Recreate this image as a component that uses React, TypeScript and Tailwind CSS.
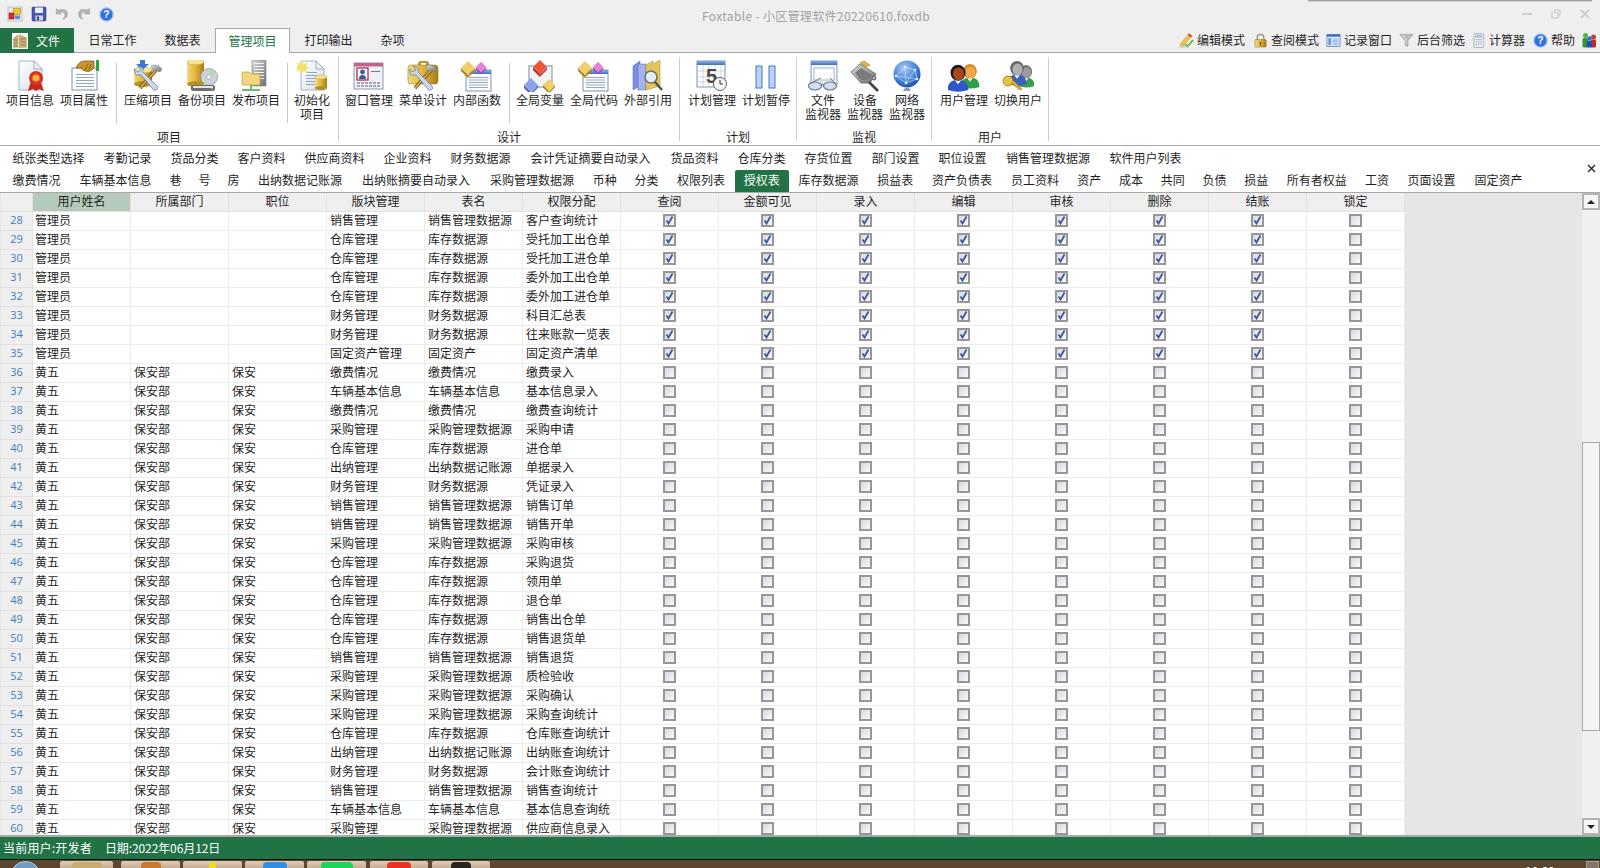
import React from "react";

type IconProps = { size?: number };

const Svg = ({ size = 32, children }: { size?: number; children: React.ReactNode }) => (
  <svg width={size} height={size} viewBox="0 0 32 32" className="shrink-0">
    {children}
  </svg>
);

const Defs = () => (
  <svg className="block h-0 w-0">
    <defs>
      <linearGradient id="gold" x1="0" x2="1" y1="0" y2="0">
        <stop offset="0" stopColor="#f6dc7c" />
        <stop offset="0.55" stopColor="#dcae3a" />
        <stop offset="1" stopColor="#a87c14" />
      </linearGradient>
      <linearGradient id="paper" x1="0" x2="1" y1="0" y2="1">
        <stop offset="0" stopColor="#ffffff" />
        <stop offset="1" stopColor="#d6e0ee" />
      </linearGradient>
      <linearGradient id="titleblue" x1="0" x2="0" y1="0" y2="1">
        <stop offset="0" stopColor="#86aeea" />
        <stop offset="1" stopColor="#3f6fc4" />
      </linearGradient>
      <radialGradient id="globe" cx="0.4" cy="0.3" r="0.8">
        <stop offset="0" stopColor="#a9ccf5" />
        <stop offset="0.6" stopColor="#3f7fd6" />
        <stop offset="1" stopColor="#123f96" />
      </radialGradient>
      <linearGradient id="steel" x1="0" x2="1" y1="0" y2="1">
        <stop offset="0" stopColor="#dcdcdc" />
        <stop offset="1" stopColor="#6e6e6e" />
      </linearGradient>
    </defs>
  </svg>
);

const Doc = ({ x = 4, y = 1, w = 22, h = 29 }) => (
  <g>
    <path
      d={`M${x} ${y}h${w - 8}l8 8v${h - 8}h-${w}z`}
      fill="url(#paper)"
      stroke="#8ba0bf"
      strokeWidth="0.8"
    />
    <path d={`M${x + w - 8} ${y}v8h8z`} fill="#eef2f8" stroke="#8ba0bf" strokeWidth="0.8" />
  </g>
);

const Cyl = ({ x, y, w, h }: { x: number; y: number; w: number; h: number }) => (
  <g>
    <rect x={x} y={y} width={w} height={h} fill="url(#gold)" />
    <ellipse cx={x + w / 2} cy={y + h} rx={w / 2} ry={w / 6} fill="#b98e20" />
    <ellipse cx={x + w / 2} cy={y} rx={w / 2} ry={w / 6} fill="#f8e596" stroke="#c79f30" strokeWidth="0.5" />
  </g>
);

const Rhomb = ({ x, y, c, d, s = 1 }: { x: number; y: number; c: string; d: string; s?: number }) => (
  <g transform={`translate(${x} ${y}) scale(${s})`}>
    <path d="M-7 0L0 7V10L-7 3Z" fill={d} />
    <path d="M7 0L0 7V10L7 3Z" fill={d} opacity="0.8" />
    <path d="M0 -7L7 0L0 7L-7 0Z" fill={c} />
  </g>
);

const Tools = () => (
  <g>
    <path d="M26 8L8 28" stroke="#7c5a20" strokeWidth="3.4" />
    <path d="M26 8L8 28" stroke="#d9b05a" strokeWidth="1.6" />
    <path d="M19 6q6-3 11 3l-2 3-5-2-2 1z" fill="url(#steel)" stroke="#6f7a8a" strokeWidth="0.5" />
    <path d="M6 6l5 2v4l14 14q2 3-1 4t-4-2L9 15H4L2 9l4 3 3-2z" fill="#cbd8ea" stroke="#6078a0" strokeWidth="0.7" />
  </g>
);

const Lines = ({ x, y, w, n, gap = 3, c = "#8fa6c6" }: { x: number; y: number; w: number; n: number; gap?: number; c?: string }) => (
  <g stroke={c} strokeWidth="1">
    {Array.from({ length: n }).map((_, i) => (
      <path key={i} d={`M${x} ${y + i * gap + 0.5}h${w}`} />
    ))}
  </g>
);

const TableIc = ({ x = 5, y = 10, w = 25, h = 21 }) => (
  <g>
    <rect x={x} y={y} width={w} height={h} fill="#fff" stroke="#7e90ad" />
    <rect x={x} y={y} width={w} height="4" fill="url(#titleblue)" />
    <Lines x={x + 3} y={y + 7} w={w - 6} n={5} gap={2.5} />
  </g>
);

const Person = ({ x, y, hair, face, body, s = 1 }: { x: number; y: number; hair: string; face: string; body: string; s?: number }) => (
  <g transform={`translate(${x} ${y}) scale(${s})`}>
    <path d="M-9 20q0-9 9-9t9 9q-9 3-18 0z" fill={body} />
    <path d="M-3 11l3 4 3-4z" fill="#fff" />
    <ellipse cx="0" cy="5" rx="6.5" ry="7" fill={hair} />
    <ellipse cx="0.5" cy="6" rx="4.8" ry="5.6" fill={face} />
  </g>
);

const IconInfo = () => (
  <Svg>
    <Doc x={5} y={1} w={23} h={29} />
    <path d="M17 21l-3 10 5-2 3 2 3-2 5 2-4-10z" fill="#c8281a" />
    <circle cx="22" cy="18" r="7" fill="#d9321e" />
    <circle cx="22" cy="18" r="3.6" fill="#f6b33c" />
  </Svg>
);

const IconAttr = () => (
  <Svg>
    <rect x="4" y="8" width="25" height="22" fill="#fff" stroke="#7e90ad" />
    <Lines x={8} y={14} w={18} n={5} gap={3} />
    <rect x="28" y="0" width="3" height="11" fill="#23a83c" />
    <path d="M8 8q3-7 8-7h10v7q-4 5-9 3t-3-3z" fill="#c9922c" stroke="#7a5510" strokeWidth="0.7" />
    <path d="M17 10l3-6M21 10l2-6" stroke="#7a5510" strokeWidth="0.8" />
  </Svg>
);

const IconCompress = () => (
  <Svg>
    <Cyl x={2} y={10} w={18} h={14} />
    <path d="M8 0h5v4h4l-6.5 6L4 4h4z" fill="#3f75d4" />
    <Tools />
  </Svg>
);

const IconBackup = () => (
  <Svg>
    <Cyl x={1} y={2} w={17} h={22} />
    <circle cx="23" cy="17" r="8.5" fill="#ccd2d8" stroke="#7a8088" strokeWidth="0.6" />
    <circle cx="23" cy="17" r="2.5" fill="#f4f4f4" stroke="#808080" strokeWidth="0.5" />
    <path d="M23 10a7 7 0 0 1 6 4l-4 2z" fill="#a6e0a2" />
    <rect x="5" y="25" width="24" height="6" rx="2" fill="#6e6e6e" />
    <rect x="7" y="26" width="20" height="2" fill="#e4e4e4" />
    <rect x="25" y="28" width="2" height="2" fill="#46c050" />
  </Svg>
);

const IconPublish = () => (
  <Svg>
    <rect x="12" y="0" width="14" height="26" fill="url(#steel)" stroke="#7c7c7c" strokeWidth="0.6" />
    <Lines x={14} y={3} w={10} n={6} gap={3} c="#f2f2f2" />
    <path d="M2 12h7l2 2h9v11H2z" fill="#f2d67c" stroke="#b8942c" strokeWidth="0.6" />
    <path d="M11 25v4M2 30h18" stroke="#3aa640" strokeWidth="1.4" />
  </Svg>
);

const IconInit = () => (
  <Svg>
    <Doc x={5} y={1} w={23} h={29} />
    <Lines x={10} y={12} w={11} n={5} gap={3} />
    <Cyl x={19} y={17} w={12} h={11} />
    <path d="M6 0l1.5 4 4-1.500L10 6l4 1.500-4 1.500 1.500 3.500-4-1.500L6 14l-1.500-3.500-4 1.500L2 9 -1 7.500 2 6 .5 2.500l4 1.500z" fill="#f5e070" stroke="#f8f3b8" strokeWidth="0.4" />
  </Svg>
);

const IconWindow = () => (
  <Svg>
    <rect x="1" y="3" width="29" height="26" fill="#eef0f4" stroke="#8a9ab0" />
    <rect x="1" y="3" width="29" height="3.5" fill="#c2648a" />
    <rect x="4" y="8" width="11" height="12" fill="#fff" stroke="#a81e4c" strokeWidth="1.2" />
    <circle cx="9.5" cy="12" r="2.4" fill="#3a5a96" />
    <path d="M6 19q0-4 3.500-4t3.500 4z" fill="#3a5a96" />
    <Lines x={18} y={11} w={9} n={1} c="#707a8a" />
    <path d="M4 23h23M4 26h23" stroke="#8a94a4" strokeWidth="1.5" strokeDasharray="3 1" />
  </Svg>
);

const IconMenu = () => (
  <Svg>
    <path d="M11 4q0-3 3-3h5q3 0 3 3v2h-3V3h-5v3h-3z" fill="#b8942c" />
    <rect x="1" y="5" width="30" height="19" rx="3" fill="url(#gold)" stroke="#a07e20" strokeWidth="0.6" />
    <Tools />
  </Svg>
);

const IconFunc = () => (
  <Svg>
    <TableIc />
    <Rhomb x={7} y={8} c="#f0cf6a" d="#a8841c" />
    <Rhomb x={20} y={7} c="#e384d8" d="#a044a4" s={0.75} />
  </Svg>
);

const IconVar = () => (
  <Svg>
    <rect x="5" y="6" width="23" height="21" fill="#f4f4f4" stroke="#8a9ab0" strokeWidth="1.2" />
    <Rhomb x={16} y={7} c="#f0553c" d="#b42c1c" />
    <Rhomb x={7} y={25} c="#8ca4ea" d="#4a62b0" />
    <Rhomb x={25} y={25} c="#f0cf6a" d="#a8841c" s={0.85} />
  </Svg>
);

const IconBooks = () => (
  <Svg>
    <path d="M1 6l7-5v25l-7 4z" fill="#7d8fe0" stroke="#5262a8" strokeWidth="0.5" />
    <rect x="6" y="4" width="8" height="26" fill="#a4b2ee" stroke="#5262a8" strokeWidth="0.5" />
    <path d="M14 5l7-4v3l7-4v26l-14 4z" fill="#e6c65c" stroke="#a8841c" strokeWidth="0.5" />
    <circle cx="19" cy="17" r="6" fill="#e4f0f0" stroke="#707070" strokeWidth="1.6" />
    <path d="M23 22l7 8" stroke="#505050" strokeWidth="2.4" />
  </Svg>
);

const IconCalendar = () => (
  <Svg>
    <rect x="1" y="1" width="28" height="26" fill="#fff" stroke="#7e90ad" />
    <rect x="1" y="1" width="28" height="4" fill="url(#titleblue)" />
    <path d="M1 11h28M1 17h28M1 22h28M7 5v22M13 5v22M19 5v22M25 5v22" stroke="#c3ccd8" strokeWidth="0.8" />
    <text x="10" y="23" fontSize="20" fontWeight="700" fill="#454545" fontFamily="'Liberation Sans',sans-serif">5</text>
    <circle cx="24" cy="24" r="6.5" fill="#f2f6fa" stroke="#667" strokeWidth="1" />
    <path d="M24 20v4h3" stroke="#333" strokeWidth="1" fill="none" />
  </Svg>
);

const IconPause = () => (
  <Svg>
    <rect x="6" y="6" width="6" height="22" fill="#bcd2f4" stroke="#4a74c8" strokeWidth="1" />
    <rect x="19" y="6" width="6" height="22" fill="#bcd2f4" stroke="#4a74c8" strokeWidth="1" />
  </Svg>
);

const IconFileMon = () => (
  <Svg>
    <rect x="4" y="1" width="26" height="24" fill="#f2f5fa" stroke="#8a9ab0" />
    <rect x="4" y="1" width="26" height="4" fill="url(#titleblue)" />
    <rect x="7" y="8" width="20" height="12" fill="#fff" stroke="#a8b4c4" />
    <ellipse cx="8" cy="26" rx="6.5" ry="4" fill="#cfe0f2" stroke="#6b7a8c" strokeWidth="1.2" />
    <ellipse cx="23" cy="26" rx="6.5" ry="4" fill="#cfe0f2" stroke="#6b7a8c" strokeWidth="1.2" />
    <path d="M14 25q2-2 3 0M2 24l12-6M29 24l-6-6" stroke="#6b7a8c" strokeWidth="1" fill="none" />
  </Svg>
);

const IconDevice = () => (
  <Svg>
    <path d="M2 12l9-8 16 10-6 9H12z" fill="url(#steel)" stroke="#555" strokeWidth="0.7" />
    <path d="M6 13l6-5 11 7-4 5h-7z" fill="#7a7a7a" />
    <path d="M11 3l4-2 6 4-4 2z" fill="#e3b04a" stroke="#96701c" strokeWidth="0.5" />
    <path d="M20 22l9 9" stroke="#444" strokeWidth="2.6" />
    <circle cx="25" cy="18" r="2" fill="#bbb" stroke="#555" />
  </Svg>
);

const IconGlobe = () => (
  <Svg>
    <circle cx="16" cy="14" r="13.5" fill="url(#globe)" />
    <path d="M5 16l9-9 10 3 2 9-11 4zM14 7l1 16M24 10l-9 13M5 16l21 3" stroke="#dbe9fb" strokeWidth="0.6" fill="none" />
    <g fill="#eaf3ff">
      <circle cx="5" cy="16" r="1.2" />
      <circle cx="14" cy="7" r="1.3" />
      <circle cx="24" cy="10" r="1.2" />
      <circle cx="26" cy="19" r="1.2" />
      <circle cx="15" cy="23" r="1.3" />
    </g>
    <path d="M14 28h4l2 3h-8z" fill="#8ca0b8" />
  </Svg>
);

const IconUsers = () => (
  <Svg>
    <Person x={22} y={6} hair="#d08a2c" face="#f4a848" body="#2e9e48" s={1.05} />
    <Person x={10} y={7} hair="#1c1c1c" face="#a8481a" body="#2c58c8" s={1.15} />
  </Svg>
);

const IconSwitch = () => (
  <Svg>
    <Person x={24} y={7} hair="#777" face="#9c9c9c" body="#3a9e50" s={0.95} />
    <Person x={15} y={3} hair="#666" face="#b0b0b0" body="#3a60c0" s={1.05} />
    <circle cx="6" cy="21" r="5" fill="#e8c33c" stroke="#98781c" strokeWidth="0.8" />
    <path d="M9 23l9 7 2-1-8-8" fill="#d8b030" stroke="#98781c" strokeWidth="0.6" />
  </Svg>
);

// small toolbar icons

const IconApp = ({ size = 16 }: IconProps) => (
  <Svg size={size}>
    <rect x="2" y="2" width="28" height="28" fill="#e6e6e6" stroke="#a0a0a0" />
    <rect x="13" y="5" width="14" height="12" fill="#f2c230" stroke="#a8841c" />
    <rect x="4" y="14" width="10" height="12" fill="#d82c2c" stroke="#8a1616" />
    <rect x="16" y="19" width="10" height="7" fill="#5a8ede" />
  </Svg>
);

const IconSave = ({ size = 16 }: IconProps) => (
  <Svg size={size}>
    <rect x="2" y="2" width="28" height="28" rx="2" fill="#4a56b4" stroke="#2a3278" />
    <rect x="8" y="3" width="16" height="11" fill="#e8ecf4" />
    <rect x="9" y="19" width="15" height="10" fill="#cfd4e6" />
    <rect x="12" y="21" width="4" height="7" fill="#3a4490" />
  </Svg>
);

const IconUndo = ({ size = 16, flip = false }: IconProps & { flip?: boolean }) => (
  <Svg size={size}>
    <g transform={flip ? "translate(32 0) scale(-1 1)" : undefined}>
      <path d="M3 4v12h12l-4-4q8-3 11 3 3 7-4 13 12-3 10-15Q25 2 9 7z" fill="#b4b4b4" stroke="#8c8c8c" strokeWidth="1" />
    </g>
  </Svg>
);

const IconHelp = ({ size = 16 }: IconProps) => (
  <Svg size={size}>
    <circle cx="16" cy="16" r="14" fill="#2f72dc" stroke="#9cbcec" strokeWidth="2.5" />
    <text x="16" y="24" textAnchor="middle" fontSize="22" fontWeight="700" fill="#fff" fontFamily="'Liberation Sans',sans-serif">?</text>
  </Svg>
);

const IconPencil = () => (
  <Svg size={16}>
    <path d="M6 22L22 3l6 5-16 19-8 2z" fill="#efc050" stroke="#b08a28" strokeWidth="0.8" />
    <path d="M22 3l6 5-2 3-6-5z" fill="#d83a2c" />
    <path d="M14 24l5 5 11-13" stroke="#54b83a" strokeWidth="3.5" fill="none" />
    <ellipse cx="11" cy="30" rx="10" ry="1.5" fill="#c8c8c8" />
  </Svg>
);

const IconLock = () => (
  <Svg size={15}>
    <path d="M9 15V9q0-6 7-6t7 6v6" stroke="#9a9488" strokeWidth="3" fill="none" />
    <rect x="4" y="14" width="24" height="16" rx="2" fill="url(#gold)" stroke="#8a6c18" />
    <circle cx="16" cy="21" r="2" fill="#5a4208" />
    <rect x="15" y="21" width="2" height="5" fill="#5a4208" />
  </Svg>
);

const IconRecord = () => (
  <Svg size={15}>
    <rect x="2" y="3" width="28" height="26" fill="#e8f0fb" stroke="#3f6fc4" strokeWidth="1.5" />
    <rect x="2" y="3" width="28" height="5" fill="#3f6fc4" />
    <rect x="5" y="11" width="6" height="15" fill="#6a94dc" />
    <Lines x={14} y={12} w={13} n={5} gap={3} c="#3f6fc4" />
  </Svg>
);

const IconFunnel = () => (
  <Svg size={15}>
    <path d="M2 3h28L19 16v13l-6-3V16z" fill="#bdbdbd" stroke="#7d7d7d" strokeWidth="1" />
    <path d="M7 4l8 11v9" stroke="#eee" strokeWidth="1.5" fill="none" />
  </Svg>
);

const IconCalc = () => (
  <Svg size={15}>
    <rect x="6" y="1" width="21" height="30" rx="2" fill="#e7eaee" stroke="#9aa2ac" strokeWidth="1.5" />
    <rect x="9" y="4" width="15" height="6" fill="#a8c0e2" />
    <path d="M10 14h13M10 19h13M10 24h13" stroke="#9aa2ac" strokeWidth="2" strokeDasharray="3 2" />
  </Svg>
);

const IconPeople = () => (
  <Svg size={16}>
    <circle cx="9" cy="7" r="5" fill="#4cb83c" />
    <rect x="3" y="12" width="11" height="19" rx="3" fill="#2f9a34" />
    <circle cx="25" cy="10" r="5" fill="#d8342c" />
    <rect x="19" y="15" width="11" height="16" rx="3" fill="#c02a24" />
    <circle cx="17" cy="13" r="4.5" fill="#3a6ee0" />
    <rect x="11" y="18" width="11" height="13" rx="3" fill="#2050b4" />
  </Svg>
);

const IconBuilding = () => (
  <div className="flex h-[16px] w-[16px] items-center justify-center bg-white">
    <Svg size={16}>
      <path d="M3 10l10-7 16 6v20H3z" fill="#d8a868" stroke="#b08040" strokeWidth="0.6" />
      <path d="M3 14h10M3 20h10M3 26h10M17 12h10M17 18h10M17 24h10" stroke="#5a9a70" strokeWidth="2" />
      <path d="M13 3v26" stroke="#f4e8c8" strokeWidth="1.5" />
    </Svg>
  </div>
);

type RibbonItem = { label: string; icon: React.ReactNode; narrow?: boolean };

const Item = ({ label, icon, narrow }: RibbonItem) => (
  <div className={`flex flex-col items-center pt-[3px] ${narrow ? "w-[42px]" : "w-[54px]"}`}>
    {icon}
    <div className="mt-[1px] text-center text-[12px] leading-[14px] text-[#1f1f1f]">
      {label.split(" ").map((l) => (
        <div key={l} className="whitespace-nowrap">
          {l}
        </div>
      ))}
    </div>
  </div>
);

const Sep = ({ className }: { className: string }) => (
  <div className={`mt-[6px] h-[60px] w-px shrink-0 bg-[#c8c8c8] ${className}`} />
);

const Group = ({ title, className, pad, children }: { title: string; className: string; pad: string; children: React.ReactNode }) => (
  <div className={`flex h-[84px] shrink-0 flex-col border-r border-[#cfcfcf] ${className}`}>
    <div className={`flex h-[70px] shrink-0 ${pad}`}>{children}</div>
    <div className="mt-[3px] h-[14px] shrink-0 text-center text-[12px] leading-[14px] text-[#1f1f1f]">{title}</div>
  </div>
);

const Ribbon = () => (
  <div className="flex h-[93px] shrink-0 border-b border-[#a9a9a9] bg-white pt-[4px]">
    <Group title="项目" className="w-[339px]" pad="pl-[3px]">
      <Item label="项目信息" icon={<IconInfo />} />
      <Item label="项目属性" icon={<IconAttr />} />
      <Sep className="ml-[5px] mr-[4px]" />
      <Item label="压缩项目" icon={<IconCompress />} />
      <Item label="备份项目" icon={<IconBackup />} />
      <Item label="发布项目" icon={<IconPublish />} />
      <Sep className="ml-[4px] mr-[3px]" />
      <Item label="初始化 项目" narrow icon={<IconInit />} />
    </Group>
    <Group title="设计" className="w-[341px]" pad="pl-[3px]">
      <Item label="窗口管理" icon={<IconWindow />} />
      <Item label="菜单设计" icon={<IconMenu />} />
      <Item label="内部函数" icon={<IconFunc />} />
      <Sep className="ml-[5px] mr-[3px]" />
      <Item label="全局变量" icon={<IconVar />} />
      <Item label="全局代码" icon={<IconFunc />} />
      <Item label="外部引用" icon={<IconBooks />} />
    </Group>
    <Group title="计划" className="w-[117px]" pad="pl-[5px]">
      <Item label="计划管理" icon={<IconCalendar />} />
      <Item label="计划暂停" icon={<IconPause />} />
    </Group>
    <Group title="监视" className="w-[135px]" pad="pl-[5px]">
      <Item label="文件 监视器" narrow icon={<IconFileMon />} />
      <Item label="设备 监视器" narrow icon={<IconDevice />} />
      <Item label="网络 监视器" narrow icon={<IconGlobe />} />
    </Group>
    <Group title="用户" className="w-[117px]" pad="pl-[5px]">
      <Item label="用户管理" icon={<IconUsers />} />
      <Item label="切换用户" icon={<IconSwitch />} />
    </Group>
  </div>
);

const tools = [
  { label: "编辑模式", icon: <IconPencil />, w: "w-[75px]" },
  { label: "查阅模式", icon: <IconLock />, w: "w-[73px]" },
  { label: "记录窗口", icon: <IconRecord />, w: "w-[73px]" },
  { label: "后台筛选", icon: <IconFunnel />, w: "w-[72px]" },
  { label: "计算器", icon: <IconCalc />, w: "w-[62px]" },
  { label: "帮助", icon: <IconHelp size={15} />, w: "w-[48px]" },
];

const Header = () => (
  <div className="relative shrink-0 bg-[#efefef]">
    <div className="absolute left-[1308px] top-0 h-[2px] w-[284px] bg-linear-to-b from-[#8c8c8c] to-[#e4e4e4]" />
    <div className="flex h-[28px] items-center">
      <div className="ml-[7px] flex items-center gap-[8px]">
        <IconApp />
        <IconSave />
        <IconUndo size={14} />
        <IconUndo size={14} flip />
        <IconHelp size={15} />
      </div>
      <div className="ml-[588px] whitespace-nowrap pt-[3px] text-[12px] tracking-[0.35px] text-[#a3a3a3]">
        Foxtable - 小区管理软件20220610.foxdb
      </div>
      <div className="ml-auto mr-[10px] flex items-center gap-[19px]">
        <div className="h-[2px] w-[10px] bg-[#d0d0d0]" />
        <svg width="10" height="10" viewBox="0 0 10 10">
          <path d="M3 1h6v5H7M1 3.500h6v5.500H1z" stroke="#d0d0d0" strokeWidth="1.400" fill="none" />
        </svg>
        <svg width="10" height="10" viewBox="0 0 10 10">
          <path d="M1 1l8 8M9 1l-8 8" stroke="#d0d0d0" strokeWidth="2" />
        </svg>
      </div>
    </div>
    <div className="flex h-[25px] items-stretch border-b border-[#a9a9a9]">
      <div className="mb-[-1px] flex w-[74px] items-center gap-[8px] bg-[#217346] pl-[12px] text-[12px] text-white">
        <IconBuilding />
        <span className="text-[12px]">文件</span>
      </div>
      <div className="ml-[1px] flex items-center gap-[1px] text-[12px] text-[#1f1f1f]">
        <div className="px-[13.5px]">日常工作</div>
        <div className="px-[13.5px]">数据表</div>
        <div className="mb-[-1px] flex h-[25px] items-center self-start border border-b-0 border-[#a9a9a9] bg-white px-[12.5px] text-[#217346]">
          管理项目
        </div>
        <div className="px-[13.5px]">打印输出</div>
        <div className="px-[13.5px]">杂项</div>
      </div>
      <div className="ml-auto flex items-center pr-[3px] text-[12px] text-[#1f1f1f]">
        {tools.map((t) => (
          <div key={t.label} className={`flex items-center gap-[3px] ${t.w}`}>
            {t.icon}
            <span className="whitespace-nowrap">{t.label}</span>
          </div>
        ))}
        <IconPeople />
      </div>
    </div>
  </div>
);

const tabWidth: Record<number, string> = {
  1: "w-[29px]",
  2: "w-[41.75px]",
  3: "w-[54.5px]",
  4: "w-[67px]",
  5: "w-[79px]",
  6: "w-[91px]",
  7: "w-[104px]",
  9: "w-[128px]",
  10: "w-[141px]",
};

const row1 = ["纸张类型选择", "考勤记录", "货品分类", "客户资料", "供应商资料", "企业资料", "财务数据源", "会计凭证摘要自动录入", "货品资料", "仓库分类", "存货位置", "部门设置", "职位设置", "销售管理数据源", "软件用户列表"];
const row2 = ["缴费情况", "车辆基本信息", "巷", "号", "房", "出纳数据记账源", "出纳账摘要自动录入", "采购管理数据源", "币种", "分类", "权限列表", "授权表", "库存数据源", "损益表", "资产负债表", "员工资料", "资产", "成本", "共同", "负债", "损益", "所有者权益", "工资", "页面设置", "固定资产"];

const TabRow = ({ items, className, itemClass }: { items: string[]; className: string; itemClass?: string }) => (
  <div className={`flex pl-[3px] ${className}`}>
    {items.map((t) => (
      <div
        key={t}
        className={`flex shrink-0 items-center justify-center whitespace-nowrap ${itemClass ?? ""} ${tabWidth[t.length]} ${
          t === "授权表" ? "rounded-t-[2px] bg-[#217346] text-white" : "text-[#1f1f1f]"
        }`}
      >
        {t}
      </div>
    ))}
  </div>
);

const TableTabs = () => (
  <div className="relative h-[46px] shrink-0 bg-white text-[12px]">
    <TabRow items={row1} className="h-[24px]" />
    <TabRow items={row2} className="h-[22px]" itemClass="pb-[2px]" />
    <svg className="absolute right-[4px] top-[18px]" width="9" height="9" viewBox="0 0 9 9">
      <path d="M1 1l7 7M8 1l-7 7" stroke="#222" strokeWidth="1.3" />
    </svg>
  </div>
);

const cols = ["用户姓名", "所属部门", "职位", "版块管理", "表名", "权限分配", "查阅", "金额可见", "录入", "编辑", "审核", "删除", "结账", "锁定"];

const admin: string[][] = [
  ["销售管理", "销售管理数据源", "客户查询统计"],
  ["仓库管理", "库存数据源", "受托加工出仓单"],
  ["仓库管理", "库存数据源", "受托加工进仓单"],
  ["仓库管理", "库存数据源", "委外加工出仓单"],
  ["仓库管理", "库存数据源", "委外加工进仓单"],
  ["财务管理", "财务数据源", "科目汇总表"],
  ["财务管理", "财务数据源", "往来账款一览表"],
  ["固定资产管理", "固定资产", "固定资产清单"],
];

const guard: string[][] = [
  ["缴费情况", "缴费情况", "缴费录入"],
  ["车辆基本信息", "车辆基本信息", "基本信息录入"],
  ["缴费情况", "缴费情况", "缴费查询统计"],
  ["采购管理", "采购管理数据源", "采购申请"],
  ["仓库管理", "库存数据源", "进仓单"],
  ["出纳管理", "出纳数据记账源", "单据录入"],
  ["财务管理", "财务数据源", "凭证录入"],
  ["销售管理", "销售管理数据源", "销售订单"],
  ["销售管理", "销售管理数据源", "销售开单"],
  ["采购管理", "采购管理数据源", "采购审核"],
  ["仓库管理", "库存数据源", "采购退货"],
  ["仓库管理", "库存数据源", "领用单"],
  ["仓库管理", "库存数据源", "退仓单"],
  ["仓库管理", "库存数据源", "销售出仓单"],
  ["仓库管理", "库存数据源", "销售退货单"],
  ["销售管理", "销售管理数据源", "销售退货"],
  ["采购管理", "采购管理数据源", "质检验收"],
  ["采购管理", "采购管理数据源", "采购确认"],
  ["采购管理", "采购管理数据源", "采购查询统计"],
  ["仓库管理", "库存数据源", "仓库账查询统计"],
  ["出纳管理", "出纳数据记账源", "出纳账查询统计"],
  ["财务管理", "财务数据源", "会计账查询统计"],
  ["销售管理", "销售管理数据源", "销售查询统计"],
  ["车辆基本信息", "车辆基本信息", "基本信息查询统"],
  ["采购管理", "采购管理数据源", "供应商信息录入"],
];

const rows = [
  ...admin.map((r) => ({ who: ["管理员", "", ""], r, on: true })),
  ...guard.map((r) => ({ who: ["黄五", "保安部", "保安"], r, on: false })),
];

const Check = ({ on }: { on: boolean }) => (
  <div className="flex h-[13px] w-[13px] items-center justify-center border-2 border-[#979797] bg-linear-to-br from-[#d6d9e1] to-[#f9f9f9]">
    {on && (
      <svg width="9" height="9" viewBox="0 0 9 9" className="shrink-0">
        <path d="M1.5 4.500l2 3L7.500 0.500" stroke="#3c559f" strokeWidth="1.8" fill="none" />
      </svg>
    )}
  </div>
);

const Cell = ({ first, children }: { first: boolean; children?: React.ReactNode }) => (
  <div className={`flex h-[19px] items-center overflow-hidden whitespace-nowrap border-b border-r border-[#ececec] bg-white pb-[3px] ${first ? "pl-[2px]" : "pl-[3px]"}`}>
    {children}
  </div>
);

const Grid = () => (
  <div className="flex min-h-0 flex-1 overflow-hidden border-y border-[#a9a9a9] border-b-2 bg-[#e5e6e8] pl-px">
    <div className="grid flex-1 auto-rows-[19px] grid-cols-[32px_repeat(14,98px)] content-start overflow-hidden text-[12px] text-[#1f1f1f]">
      <div className="h-[19px] border-b border-r border-[#e2e2e2] bg-[#efefef]" />
      {cols.map((c, i) => (
        <div
          key={c}
          className={`flex h-[19px] items-center justify-center border-b border-r border-[#e2e2e2] pb-[2px] ${i === 0 ? "bg-[#b4cbbc]" : "bg-[#efefef]"}`}
        >
          {c}
        </div>
      ))}
      {rows.map((row, i) => (
        <React.Fragment key={i}>
          <div className="flex h-[19px] items-center justify-center border-b border-r border-[#e2e2e2] bg-[#efefef] pb-[3px] font-['Open_Sans',sans-serif] text-[11px] text-[#3d7fbd]">
            {28 + i}
          </div>
          {[...row.who, ...row.r].map((v, j) => (
            <Cell key={j} first={j === 0}>{v}</Cell>
          ))}
          {cols.slice(6).map((c, j) => (
            <div key={c} className="flex h-[19px] items-center justify-center border-b border-r border-[#ececec] bg-white pb-[1px]">
              <Check on={row.on && j < 7} />
            </div>
          ))}
        </React.Fragment>
      ))}
    </div>
    <div className="flex w-[18px] shrink-0 flex-col bg-[#f0f0f0]">
      <div className="flex h-[17px] items-center justify-center border-2 border-[#b4b4b4] bg-[#f6f6f6]">
        <div className="h-0 w-0 border-x-[4px] border-b-[4px] border-x-transparent border-b-[#222]" />
      </div>
      <div className="mt-[232px] h-[289px] border border-[#a9a9a9] bg-[#f4f4f4]" />
      <div className="mt-auto flex h-[17px] items-center justify-center border-2 border-[#b4b4b4] bg-[#f6f6f6]">
        <div className="h-0 w-0 border-x-[4px] border-t-[4px] border-x-transparent border-t-[#222]" />
      </div>
    </div>
  </div>
);

const StatusBar = () => (
  <div className="flex h-[22px] shrink-0 items-center bg-[#217346] pl-[3px] text-[12px] text-white">
    <span className="tracking-[0.2px]">当前用户:开发者</span>
    <span className="ml-[13px] tracking-[-0.1px]">日期:2022年06月12日</span>
  </div>
);

const buttons = [
  { w: "ml-[19px] w-[53px]", inner: "w-[30px] bg-[#c8ac74]" },
  { w: "ml-[8px] w-[59px]", inner: "w-[20px] bg-[#c87a30]" },
  { w: "ml-[3px] w-[59px]", inner: "w-[7px] bg-[#f0dc1c]" },
  { w: "ml-[3px] w-[59px]", inner: "w-[24px] bg-[#2f8fe0]" },
  { w: "ml-[3px] w-[59px]", inner: "w-[32px] bg-[#1ed45a]" },
  { w: "ml-[4px] w-[58px]", inner: "w-[24px] bg-[#e83224]" },
  { w: "ml-[4px] w-[58px]", inner: "w-[20px] bg-[#2a2420]" },
];

const Taskbar = () => (
  <div className="flex h-[9px] shrink-0 overflow-hidden border-t border-[#111] bg-[#5c4630] pt-px">
    <div className="ml-[10px] h-[31px] w-[31px] shrink-0 rounded-full border border-[#b8ccd8] bg-[#6f9cc0]" />
    {buttons.map((b) => (
      <div key={b.w + b.inner} className={`flex h-[10px] shrink-0 justify-center rounded-t-[2px] bg-linear-to-b from-[#e0cdb8] to-[#b89f84] ${b.w}`}>
        <div className={`mt-[1px] h-[10px] rounded-t-[4px] ${b.inner}`} />
      </div>
    ))}
    <div className="ml-auto mt-[3px] text-[12px] leading-[14px] text-white">10:39</div>
    <div className="ml-[31px] mr-px h-[10px] w-[13px] border border-[#a89a8a] bg-[#85766a]" />
  </div>
);

export default function App() {
  return (
    <div className="flex h-[868px] w-[1600px] flex-col overflow-hidden bg-white font-['Noto_Sans_CJK_SC','Liberation_Sans',sans-serif] leading-[14px]">
      <Defs />
      <Header />
      <Ribbon />
      <TableTabs />
      <Grid />
      <StatusBar />
      <Taskbar />
    </div>
  );
}
